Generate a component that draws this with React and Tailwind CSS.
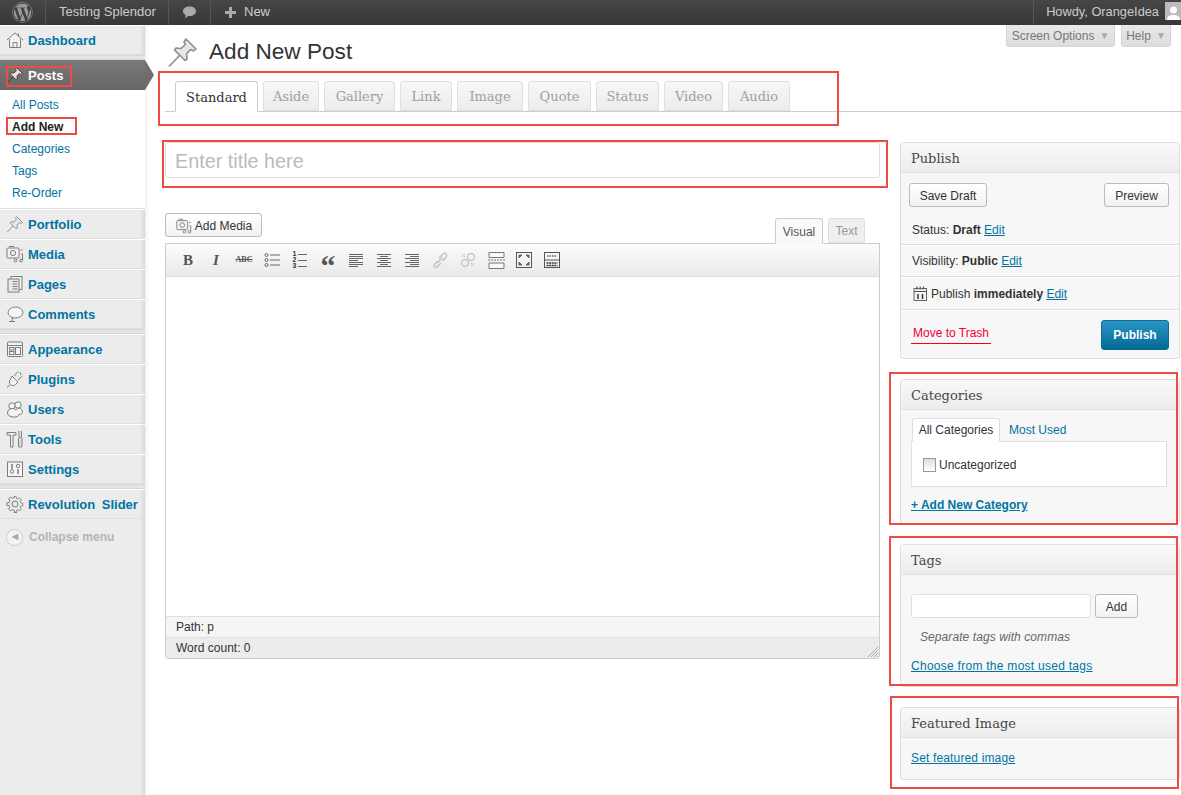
import { FaWordpress } from "react-icons/fa";

const Svg = ({ size = 18, box = 18, children, className = "" }) => (
  <svg width={size} height={size} viewBox={`0 0 ${box} ${box}`} fill="none" className={`shrink-0 ${className}`}>
    {children}
  </svg>
);

const PinIcon = ({ size = 18, head = "#e8e8e8", line = "#8a8a8a" }) => (
  <Svg size={size} box={32}>
    <path d="M13 19 2 30.5" stroke={line} strokeWidth="1.6" />
    <path
      d="M19 3 29 13 26.5 15 23.5 13.5 19.5 18 20 23 18 24.5 7.5 14 9 12 14 12.5 18.5 8.5 17 6Z"
      fill={head}
      stroke={line}
      strokeWidth="1.6"
      strokeLinejoin="round"
    />
  </Svg>
);

const stroke = { stroke: "#7d7d7d", strokeWidth: 1 };

const menuIcons = {
  home: (
    <Svg>
      <path d="M1 9 9 2l8 7M3.5 8v8.5h11V8" {...stroke} fill="#f4f4f4" />
      <path d="M7 16.5v-5h4v5M12.5 2.5v3" {...stroke} />
    </Svg>
  ),
  media: (
    <Svg>
      <rect x="1" y="3" width="12" height="10" rx="1" {...stroke} fill="#f2f2f2" />
      <path d="M3 1.5h5" {...stroke} />
      <circle cx="7" cy="8" r="2.6" {...stroke} />
      <path d="M14.5 5h2M15 9h1.5V15" {...stroke} />
      <circle cx="9.5" cy="15.5" r="1.4" {...stroke} />
      <circle cx="15" cy="15.5" r="1.4" {...stroke} />
    </Svg>
  ),
  pages: (
    <Svg>
      <rect x="5" y="1.5" width="11" height="13" {...stroke} fill="#f4f4f4" />
      <rect x="2" y="4" width="11" height="13" {...stroke} fill="#e9e9e9" />
      <path d="M6.5 6.5h5M6.5 9h5M6.5 11.5h5M6.5 14h5" {...stroke} />
    </Svg>
  ),
  comments: (
    <Svg>
      <ellipse cx="9.5" cy="7.5" rx="7.5" ry="5.5" {...stroke} fill="#f6f6f6" />
      <path d="M6.5 12 6 16.5M3 16.5h6" {...stroke} />
    </Svg>
  ),
  appearance: (
    <Svg>
      <rect x="1.5" y="2" width="15" height="14.5" rx="1" {...stroke} fill="#f2f2f2" />
      <path d="M1.5 5.5h15" {...stroke} />
      <rect x="3.5" y="7.5" width="4.5" height="2.5" {...stroke} />
      <rect x="3.5" y="11.5" width="4.5" height="3" {...stroke} />
      <rect x="9.5" y="7.5" width="5" height="7" {...stroke} />
    </Svg>
  ),
  plugins: (
    <Svg>
      <path d="M6 6 12 12 9.5 14.5C8 16 6 16 4.5 14.5S3 11 4.5 9.5Z" {...stroke} fill="#f2f2f2" />
      <path d="M8 6 12 1.5M12 10l4.5-4M4.5 14.5 1 17.5M14 2l1 3" {...stroke} />
    </Svg>
  ),
  users: (
    <Svg>
      <circle cx="6" cy="6" r="3.2" {...stroke} fill="#f4f4f4" />
      <circle cx="12" cy="5" r="3.2" {...stroke} fill="#f4f4f4" />
      <path d="M1.5 13c0-3 2.500-4.500 4.500-4.500 2 0 3 1 4 1.500 1-1.500 2-1.800 3-1.800 2 0 3.500 1.800 3.500 4 0 2-2 2.300-3.500 2.300-.5 2-3 2.500-5 2.500s-6.500-1-6.500-4Z" {...stroke} fill="#f4f4f4" />
    </Svg>
  ),
  tools: (
    <Svg>
      <path d="M1 2.500h9V5H7v12H4.500V5H1Z" {...stroke} fill="#f2f2f2" />
      <path d="M13 1v6M15.500 1v6" {...stroke} />
      <rect x="12.500" y="7.500" width="3.500" height="9.500" rx="1" {...stroke} fill="#dcdcdc" />
    </Svg>
  ),
  settings: (
    <Svg>
      <rect x="1.500" y="2" width="15" height="14.500" {...stroke} fill="#f4f4f4" />
      <path d="M6 4v5M12 9v5" {...stroke} strokeWidth="1.500" />
      <circle cx="6" cy="11.500" r="1.700" {...stroke} />
      <circle cx="12" cy="6" r="1.700" {...stroke} />
    </Svg>
  ),
  gear: (
    <Svg>
      <circle cx="9" cy="9" r="3" {...stroke} />
      <path
        d="M7.600 1.500h2.800l.4 2.200 1.600.7 1.900-1.300 2 2-1.300 1.900.7 1.600 2.200.4v2.800l-2.200.4-.7 1.600 1.300 1.900-2 2-1.900-1.300-1.600.7-.4 2.200H7.600"
        {...stroke}
        transform="scale(.88) translate(1.200 .4)"
      />
      <path
        d="M10.400 16.500H7.600l-.4-2.200-1.600-.7-1.900 1.300-2-2 1.300-1.900-.7-1.600L.1 9.900V7.100l2.200-.4.7-1.600L1.700 3.200l2-2L5.600 2.500l1.600-.7.400-1.300"
        {...stroke}
        transform="translate(.8 .9)"
      />
    </Svg>
  ),
};

const topMenu = [
  { label: "Dashboard", icon: menuIcons.home },
];

const groupOne = [
  { label: "Portfolio", icon: <PinIcon /> },
  { label: "Media", icon: menuIcons.media },
  { label: "Pages", icon: menuIcons.pages },
  { label: "Comments", icon: menuIcons.comments },
];

const groupTwo = [
  { label: "Appearance", icon: menuIcons.appearance },
  { label: "Plugins", icon: menuIcons.plugins },
  { label: "Users", icon: menuIcons.users },
  { label: "Tools", icon: menuIcons.tools },
  { label: "Settings", icon: menuIcons.settings },
];

const postLinks = ["All Posts", "Add New", "Categories", "Tags", "Re-Order"];

const formats = [
  { label: "Aside", w: "w-[56px]" },
  { label: "Gallery", w: "w-[71px]" },
  { label: "Link", w: "w-[52px]" },
  { label: "Image", w: "w-[66px]" },
  { label: "Quote", w: "w-[63px]" },
  { label: "Status", w: "w-[63px]" },
  { label: "Video", w: "w-[59px]" },
  { label: "Audio", w: "w-[62px]" },
];

const MenuRow = ({ item }) => (
  <div className="flex h-[30px] items-center gap-[3px] border-t border-t-white border-b border-b-[#dfdfdf] pt-px pl-[6px] text-[13px] font-bold text-[#0074a2] [word-spacing:3px]">
    <span className="-mt-px flex w-[19px]">{item.icon}</span>
    {item.label}
  </div>
);

const Separator = () => <div className="h-[5px] border-y border-y-[#d8d8d8] bg-[#e4e4e4]" />;

const Sidebar = () => (
  <aside className="relative w-[145px] shrink-0 bg-[#ececec] shadow-[inset_-5px_0_5px_-4px_rgba(0,0,0,0.14),2px_0_3px_rgba(0,0,0,0.06)]">
    {topMenu.map((item) => (
      <MenuRow key={item.label} item={item} />
    ))}
    <Separator />
    <div className="relative flex h-[30px] items-center gap-[3px] bg-gradient-to-b from-[#7a7a7a] to-[#666] pt-px pl-[6px] text-[13px] font-bold text-white">
      <span className="-mt-px flex w-[19px]">
        <PinIcon head="#f5dcdc" line="#3a3a3a" />
      </span>
      Posts
      <svg width="9" height="30" viewBox="0 0 9 30" className="absolute top-0 left-full">
        <path d="M0 0 9 15 0 30Z" fill="#6e6e6e" />
      </svg>
    </div>
    <div className="flex flex-col border-b border-b-[#dfdfdf] bg-white pt-[4px] pb-[4px] text-xs">
      {postLinks.map((link) => (
        <div
          key={link}
          className={
            link === "Add New"
              ? "flex h-[22px] items-center pl-[12px] font-bold text-[#222]"
              : "flex h-[22px] items-center pl-[12px] text-[#0074a2]"
          }
        >
          {link}
        </div>
      ))}
    </div>
    {groupOne.map((item) => (
      <MenuRow key={item.label} item={item} />
    ))}
    <Separator />
    {groupTwo.map((item) => (
      <MenuRow key={item.label} item={item} />
    ))}
    <Separator />
    <MenuRow item={{ label: "Revolution Slider", icon: menuIcons.gear }} />
    <div className="flex h-[34px] items-center gap-[6px] pt-[2px] pl-[6px] text-xs font-bold text-[#b4b4b4]">
      <span className="flex h-[17px] w-[17px] items-center justify-center rounded-full border border-[#ccc] bg-[#f4f4f4]">
        <span className="text-[8px] leading-none text-[#aaa]">◀</span>
      </span>
      Collapse menu
    </div>
  </aside>
);

const AdminBar = () => (
  <header className="flex h-[25px] shrink-0 items-center justify-between bg-gradient-to-b from-[#464646] to-[#373737] text-[13px] text-[#ccc]">
    <div className="flex h-full items-center">
      <div className="flex h-full w-[46px] items-center justify-center border-r border-r-[#555]">
        <FaWordpress size={21} className="text-[#999]" />
      </div>
      <div className="flex h-full w-[123px] items-center border-r border-r-[#555] pb-px pl-[13px]">Testing Splendor</div>
      <div className="flex h-full w-[42px] items-center justify-center border-r border-r-[#555]">
        <Svg size={15} box={15}>
          <path d="M7.500 1.500c3.800 0 6.500 2 6.500 4.700S11.300 11 7.500 11c-.5 0-1 0-1.500-.1L3.500 13.500V10C2 9.200 1 7.800 1 6.200 1 3.500 3.700 1.500 7.500 1.500Z" fill="#aaa" />
        </Svg>
      </div>
      <div className="flex items-center gap-[8px] pb-px pl-[14px]">
        <span className="relative h-[11px] w-[11px]">
          <span className="absolute top-[4px] left-0 h-[3px] w-[11px] bg-[#aaa]" />
          <span className="absolute top-0 left-[4px] h-[11px] w-[3px] bg-[#aaa]" />
        </span>
        New
      </div>
    </div>
    <div className="flex h-full items-center border-l border-l-[#555] pb-px pl-[12px] text-[12.8px]">
      Howdy, OrangeIdea
      <span className="mb-[3px] ml-[6px] flex h-[18px] w-[16px] items-end justify-center overflow-hidden bg-[#bbb]">
        <Svg size={15} box={15}>
          <circle cx="7.500" cy="5" r="3.500" fill="#fff" />
          <path d="M1 15c0-4 3-5 6.500-5S14 11 14 15Z" fill="#fff" />
        </Svg>
      </span>
    </div>
  </header>
);

const ToolButton = ({ children }) => (
  <span className="flex h-[28px] w-[28px] items-center justify-center">{children}</span>
);

const Lines = ({ rows }) => (
  <Svg size={16} box={16}>
    {rows.map(([x1, x2], i) => (
      <path key={i} d={`M${x1} ${2.5 + i * 2}H${x2}`} stroke="#666" />
    ))}
  </Svg>
);

const Toolbar = () => (
  <div className="flex h-[33px] items-center border-b border-b-[#dfdfdf] bg-gradient-to-b from-[#fcfcfc] to-[#e9e9e9] pl-[8px]">
    <ToolButton>
      <span className="font-['Liberation_Serif',serif] text-[15px] font-bold text-[#555]">B</span>
    </ToolButton>
    <ToolButton>
      <span className="font-['Liberation_Serif',serif] text-[15px] font-bold text-[#555] italic">I</span>
    </ToolButton>
    <ToolButton>
      <span className="font-['Liberation_Serif',serif] text-[8px] font-bold text-[#555] line-through">ABC</span>
    </ToolButton>
    <ToolButton>
      <Svg size={16} box={16}>
        {[3, 8, 13].map((y) => (
          <g key={y}>
            <circle cx="2.500" cy={y} r="1.500" stroke="#666" />
            <path d={`M6 ${y}h10`} stroke="#666" />
          </g>
        ))}
      </Svg>
    </ToolButton>
    <ToolButton>
      <span className="flex flex-col font-['Liberation_Sans',sans-serif] text-[7px] leading-[6px] font-bold text-[#333]">
        {[1, 2, 3].map((n) => (
          <span key={n} className="flex items-center gap-[2px]">
            {n}
            <span className="h-px w-[9px] bg-[#666]" />
          </span>
        ))}
      </span>
    </ToolButton>
    <ToolButton>
      <span className="mt-[12px] font-['Liberation_Serif',serif] text-[30px] leading-none font-bold text-[#555]">“</span>
    </ToolButton>
    <ToolButton>
      <Lines rows={[[1, 15], [1, 15], [1, 15], [1, 10], [1, 15], [1, 15], [1, 10]]} />
    </ToolButton>
    <ToolButton>
      <Lines rows={[[1, 15], [4, 12], [1, 15], [4, 12], [1, 15], [4, 12], [1, 15]]} />
    </ToolButton>
    <ToolButton>
      <Lines rows={[[1, 15], [6, 15], [1, 15], [6, 15], [1, 15], [6, 15], [1, 15]]} />
    </ToolButton>
    <ToolButton>
      <Svg size={16} box={16}>
        <path d="M6 9 2.500 12.500a1.800 1.800 0 0 0 2.500 2.500L9 11M7 6l4-4a1.800 1.800 0 0 1 3 3L10.500 9M5.500 10.500l5-5" stroke="#c4c4c4" strokeWidth="1.500" />
      </Svg>
    </ToolButton>
    <ToolButton>
      <Svg size={16} box={16}>
        <circle cx="5" cy="11" r="3.500" stroke="#c8c8c8" strokeWidth="1.500" />
        <circle cx="11" cy="5" r="3.500" stroke="#c8c8c8" strokeWidth="1.500" />
        <path d="M2 2l3 3M5 2 2 5M11 11l3 3M14 11l-3 3" stroke="#c8c8c8" />
      </Svg>
    </ToolButton>
    <ToolButton>
      <Svg size={17} box={17}>
        <path d="M1 .5h15v5H1ZM1 11h15v5.500H1Z" stroke="#777" fill="#f8f8f8" />
        <path d="M0 8h17" stroke="#777" strokeDasharray="2 1" />
      </Svg>
    </ToolButton>
    <ToolButton>
      <Svg size={16} box={16}>
        <rect x=".5" y=".5" width="15" height="15" stroke="#555" />
        <path d="M3 3h3L3 6ZM13 3v3l-3-3ZM3 13v-3l3 3ZM13 13h-3l3-3Z" fill="#666" stroke="#666" />
      </Svg>
    </ToolButton>
    <ToolButton>
      <Svg size={16} box={16}>
        <rect x=".5" y=".5" width="15" height="15" stroke="#555" fill="#f5f5f5" />
        <path d="M0 8h16" stroke="#555" />
        <path d="M3 4h10" stroke="#666" strokeWidth="1.500" strokeDasharray="1.500 1" />
        <path d="M2.500 11h11M2.500 13.500h11" stroke="#333" strokeWidth="1.500" strokeDasharray="2 .6" />
      </Svg>
    </ToolButton>
  </div>
);

const Box = ({ title, children, className = "" }) => (
  <section className={`rounded-[3px] border border-[#dfdfdf] bg-[#f7f7f7] ${className}`}>
    <h3 className="flex h-[30px] items-center border-b border-b-[#dfdfdf] bg-gradient-to-b from-[#f9f9f9] to-[#ececec] pt-[2px] pl-[10px] font-['DejaVu_Serif',serif] text-[13px] font-normal text-[#464646]">
      {title}
    </h3>
    {children}
  </section>
);

const Btn = ({ children, className = "" }) => (
  <button className={`flex h-[24px] items-center justify-center rounded-[3px] border border-[#bbb] bg-gradient-to-b from-white to-[#f2f2f2] pt-px text-xs text-[#333] ${className}`}>
    {children}
  </button>
);

const PublishBox = () => (
  <Box title="Publish">
    <div className="flex justify-between pt-[10px] pr-[10px] pb-[10px] pl-[8px]">
      <Btn className="w-[78px]">Save Draft</Btn>
      <Btn className="w-[65px]">Preview</Btn>
    </div>
    <div className="flex h-[28px] items-center border-b border-b-[#dfdfdf] pb-[2px] pl-[11px] text-xs text-[#333]">
      Status:&nbsp;<b>Draft</b>&nbsp;<span className="text-[#0074a2] underline">Edit</span>
    </div>
    <div className="flex h-[32px] items-center border-t border-t-white border-b border-b-[#dfdfdf] pl-[11px] text-xs text-[#333]">
      Visibility:&nbsp;<b>Public</b>&nbsp;<span className="text-[#0074a2] underline">Edit</span>
    </div>
    <div className="flex h-[33px] items-center gap-[3px] border-t border-t-white border-b border-b-[#dfdfdf] pl-[12px] text-xs text-[#333]">
      <Svg size={15} box={15}>
        <rect x="1" y="2.500" width="12.500" height="12" stroke="#666" fill="#f4f4f4" />
        <path d="M1 5.500h12.500M4 .5v3M7.200 .5v3M10.500 .5v3" stroke="#555" strokeWidth="1.200" />
        <path d="M5 8v5M9.500 8v5" stroke="#333" strokeWidth="1.500" />
      </Svg>
      <span>
        Publish <b>immediately</b> <span className="text-[#0074a2] underline">Edit</span>
      </span>
    </div>
    <div className="flex h-[48px] items-center justify-between border-t border-t-white pr-[10px] pl-[10px]">
      <span className="border-b border-b-[#f00] px-[2px] pb-[2px] text-xs text-[#f0003c]">Move to Trash</span>
      <span className="flex h-[30px] w-[68px] items-center justify-center rounded-[3px] border border-[#0a6d96] bg-gradient-to-b from-[#2a95c5] to-[#006b97] text-xs font-bold text-white">
        Publish
      </span>
    </div>
  </Box>
);

const CategoriesBox = () => (
  <Box title="Categories" className="h-[145px]">
    <div className="pt-[8px] pr-[12px] pl-[10px]">
      <div className="flex h-[24px] text-xs">
        <span className="relative z-10 ml-px flex h-[24px] w-[88px] items-center justify-center rounded-t-[3px] border border-[#dfdfdf] border-b-white bg-white text-[#333]">
          All Categories
        </span>
        <span className="flex items-center pl-[9px] text-[#0074a2]">Most Used</span>
      </div>
      <div className="-mt-px flex h-[46px] items-center gap-[3px] border border-[#dfdfdf] bg-white pt-px pl-[11px] text-xs text-[#333]">
        <span className="h-[14px] w-[13px] border border-[#999] bg-gradient-to-b from-[#ddd] to-white" />
        Uncategorized
      </div>
      <div className="mt-[10px] text-xs font-bold text-[#0074a2] underline">+ Add New Category</div>
    </div>
  </Box>
);

const TagsBox = () => (
  <Box title="Tags" className="h-[143px]">
    <div className="px-[10px] pt-[19px] text-xs">
      <div className="flex gap-[4px]">
        <div className="h-[24px] w-[180px] rounded-[3px] border border-[#dfdfdf] bg-white" />
        <Btn className="w-[43px]">Add</Btn>
      </div>
      <p className="mt-[11px] pl-[9px] tracking-[0.08px] text-[#666] italic">Separate tags with commas</p>
      <p className="mt-[13px] tracking-[0.27px] text-[#0074a2] underline">Choose from the most used tags</p>
    </div>
  </Box>
);

const FeaturedBox = () => (
  <Box title="Featured Image" className="h-[73px]">
    <p className="px-[10px] pt-[12px] text-xs tracking-[0.15px] text-[#0074a2] underline">Set featured image</p>
  </Box>
);

const Editor = () => (
  <div className="flex-1">
    <div className="h-[40px]" />
    <div className="-mt-[7px] flex h-[32px] items-end justify-between">
      <Btn className="mb-[6px] w-[97px] gap-[2px] text-[#333]">
        <span className="scale-90">{menuIcons.media}</span>
        Add Media
      </Btn>
      <div className="flex gap-[5px] pr-[15px] text-xs">
        <span className="relative z-10 -mb-px flex h-[26px] w-[48px] items-center justify-center rounded-t-[3px] border border-[#ccc] border-b-[#f5f5f5] bg-[#f9f9f9] pt-[2px] text-[#555]">
          Visual
        </span>
        <span className="flex h-[25px] w-[37px] items-center justify-center rounded-t-[3px] border border-[#dfdfdf] bg-[#efefef] pt-px text-[#999]">
          Text
        </span>
      </div>
    </div>
    <div className="overflow-hidden rounded-b-[3px] border border-[#ccc]">
      <Toolbar />
      <div className="h-[339px] bg-white" />
      <div className="flex h-[21px] items-center border-t border-t-[#dfdfdf] bg-[#f5f5f5] pl-[10px] text-xs text-[#333]">
        Path: p
      </div>
      <div className="relative flex h-[21px] items-center border-t border-t-[#dfdfdf] bg-[#ececec] pl-[10px] text-xs text-[#333]">
        Word count: 0
        <svg width="12" height="12" viewBox="0 0 12 12" className="absolute right-0 bottom-0">
          <path d="M11 1 1 11M11 4 4 11M11 7 7 11M11 10 10 11" stroke="#aaa" />
        </svg>
      </div>
    </div>
  </div>
);

const Main = () => (
  <main className="flex min-w-0 flex-1 flex-col">
    <div className="flex h-[56px] justify-between pl-[22px]">
      <div className="flex items-center gap-[10px] pb-[2px]">
        <PinIcon size={32} head="#e6e6e6" line="#8e8e8e" />
        <h1 className="text-[22.6px] leading-none font-normal text-[#333]">Add New Post</h1>
      </div>
      <div className="flex items-start gap-[6px] pr-[10px] text-xs text-[#777]">
        <span className="flex h-[22px] w-[109px] items-center justify-center gap-[5px] rounded-b-[3px] border border-t-0 border-[#d5d5d5] bg-gradient-to-b from-[#e8e8e8] to-[#ddd]">
          Screen Options <span className="text-[10px] text-[#aaa]">▼</span>
        </span>
        <span className="flex h-[22px] w-[50px] items-center justify-center gap-[5px] rounded-b-[3px] border border-t-0 border-[#d5d5d5] bg-gradient-to-b from-[#e8e8e8] to-[#ddd]">
          Help <span className="text-[10px] text-[#aaa]">▼</span>
        </span>
      </div>
    </div>
    <div className="ml-[20px] flex h-[31px] gap-[5px] border-b border-b-[#ccc] pl-[10px] font-['DejaVu_Serif',serif] text-[13px]">
      <span className="-mb-px flex h-[31px] w-[83px] items-center justify-center rounded-t-[3px] border border-[#ccc] border-b-white bg-white pt-[2px] text-[#333]">
        Standard
      </span>
      {formats.map((tab) => (
        <span
          key={tab.label}
          className={`flex h-[30px] ${tab.w} items-center justify-center rounded-t-[3px] border border-[#dfdfdf] bg-gradient-to-b from-[#f7f7f7] to-[#ececec] pt-[2px] text-[#a0a0a0]`}
        >
          {tab.label}
        </span>
      ))}
    </div>
    <div className="mt-[30px] flex gap-[20px] pr-px pl-[20px]">
      <div className="flex w-[715px] shrink-0 flex-col">
        <input
          placeholder="Enter title here"
          className="h-[36px] w-full rounded-[3px] border border-[#dfdfdf] pt-[2px] pl-[9px] text-[19.8px] text-[#333] outline-none placeholder:text-[#bbb]"
        />
        <Editor />
      </div>
      <div className="flex w-[280px] shrink-0 flex-col gap-[20px]">
        <PublishBox />
        <CategoriesBox />
        <TagsBox />
        <FeaturedBox />
      </div>
    </div>
  </main>
);

export default function App() {
  return (
    <div className="relative flex h-[795px] w-[1181px] flex-col overflow-hidden bg-white font-['Liberation_Sans',Arial,sans-serif]">
      <AdminBar />
      <div className="flex min-h-0 flex-1">
        <Sidebar />
        <Main />
      </div>

      {/* red annotation boxes */}
      <div className="pointer-events-none absolute top-[66px] left-[6px] h-[21px] w-[66px] border-2 border-[#ef4a43]" />
      <div className="pointer-events-none absolute top-[117px] left-[6px] h-[18px] w-[71px] border-2 border-[#ef4a43]" />
      <div className="pointer-events-none absolute top-[71px] left-[158px] h-[55px] w-[681px] border-2 border-[#ef4a43]" />
      <div className="pointer-events-none absolute top-[140px] left-[162px] h-[48px] w-[726px] border-2 border-[#ef4a43]" />
      <div className="pointer-events-none absolute top-[372px] left-[889px] h-[153px] w-[289px] border-2 border-[#ef4a43]" />
      <div className="pointer-events-none absolute top-[536px] left-[889px] h-[150px] w-[289px] border-2 border-[#ef4a43]" />
      <div className="pointer-events-none absolute top-[696px] left-[890px] h-[93px] w-[289px] border-2 border-[#ef4a43]" />
    </div>
  );
}
